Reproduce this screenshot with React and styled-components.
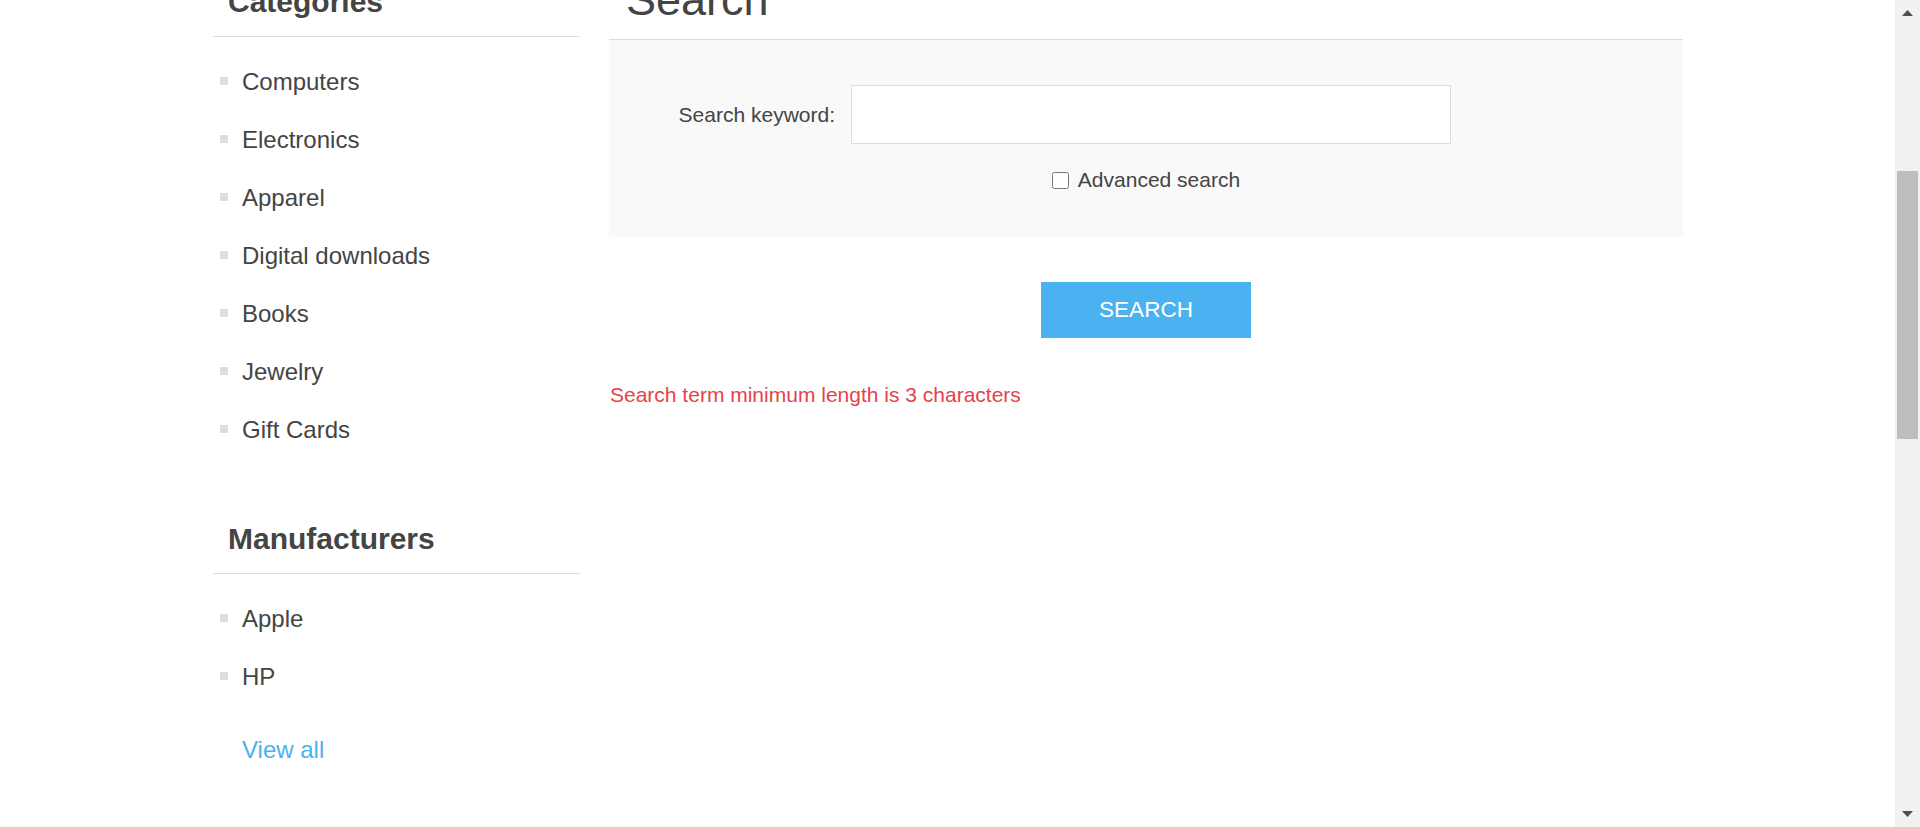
import styled, { createGlobalStyle } from "styled-components";

const GlobalStyle = createGlobalStyle`
  html, body {
    margin: 0;
    padding: 0;
    background: #fff;
    overflow: hidden;
  }
  body {
    font-family: "Liberation Sans", Arial, Helvetica, sans-serif;
    color: #444;
  }
`;

const categories = [
  "Computers",
  "Electronics",
  "Apparel",
  "Digital downloads",
  "Books",
  "Jewelry",
  "Gift Cards",
];
const manufacturers = ["Apple", "HP"];

const App = () => {
  return (
    <>
      <GlobalStyle />
      <Page>
        <Center>
          <Side>
            <Block>
              <BlockTitle>Categories</BlockTitle>
              <List>
                {categories.map((c) => (
                  <Item key={c}>{c}</Item>
                ))}
              </List>
            </Block>
            <Block>
              <BlockTitle>Manufacturers</BlockTitle>
              <List>
                {manufacturers.map((m) => (
                  <Item key={m}>{m}</Item>
                ))}
              </List>
              <ViewAll href="#">View all</ViewAll>
            </Block>
          </Side>
          <Main>
            <Title>Search</Title>
            <SearchBox>
              <FieldRow>
                <Label htmlFor="q">Search keyword:</Label>
                <Input id="q" type="text" />
              </FieldRow>
              <CheckRow>
                <Check type="checkbox" id="adv" />
                <CheckLabel htmlFor="adv">Advanced search</CheckLabel>
              </CheckRow>
            </SearchBox>
            <Buttons>
              <SearchButton>SEARCH</SearchButton>
            </Buttons>
            <Warning>Search term minimum length is 3 characters</Warning>
          </Main>
        </Center>
      </Page>
      <Scrollbar>
        <Arrow viewBox="0 0 11 6" $pos="top">
          <polygon points="0,6 5.5,0 11,6" fill="#505050" />
        </Arrow>
        <Thumb />
        <Arrow viewBox="0 0 11 6" $pos="bottom">
          <polygon points="0,0 11,0 5.5,6" fill="#505050" />
        </Arrow>
      </Scrollbar>
    </>
  );
};

const Page = styled.div`
  padding: 0 25px 0 1px;
  height: 100vh;
  overflow: hidden;
`;

const Center = styled.div`
  width: 1470px;
  margin: -27px auto 0;
  display: flex;
  justify-content: space-between;
  align-items: flex-start;
`;

const Side = styled.aside`
  width: 367px;
  padding-top: 11px;
`;

const Block = styled.div`
  margin-bottom: 48px;
`;

const BlockTitle = styled.h2`
  margin: 0;
  padding: 0 0 16px 15px;
  font-size: 30px;
  line-height: 36px;
  font-weight: bold;
  color: #444;
  border-bottom: 1px solid #ddd;
`;

const List = styled.ul`
  list-style: none;
  margin: 0;
  padding: 15px 0;
`;

const Item = styled.li`
  display: flex;
  align-items: center;
  padding: 14.5px 0;
  font-size: 24px;
  line-height: 29px;
  color: #444;
  &::before {
    content: "";
    width: 8px;
    height: 8px;
    margin: 0 14px 0 7px;
    background: #ddd;
  }
`;

const ViewAll = styled.a`
  display: block;
  padding: 14.5px 0 14.5px 29px;
  font-size: 24px;
  line-height: 29px;
  color: #4ab2f1;
  text-decoration: none;
`;

const Main = styled.main`
  width: 1074px;
`;

const Title = styled.h1`
  margin: 0;
  padding: 0 15px 12px 17px;
  font-size: 45px;
  line-height: 54px;
  font-weight: normal;
  color: #444;
  border-bottom: 1px solid #ddd;
`;

const SearchBox = styled.div`
  background: #f9f9f9;
  padding: 45px 0 42px;
`;

const FieldRow = styled.div`
  display: flex;
  align-items: center;
`;

const Label = styled.label`
  width: 226px;
  margin-right: 16px;
  text-align: right;
  font-size: 21px;
  color: #444;
`;

const Input = styled.input`
  box-sizing: border-box;
  width: 600px;
  height: 59px;
  margin: 0;
  border: 1px solid #ddd;
  background: #fff;
  outline: none;
`;

const CheckRow = styled.div`
  display: flex;
  justify-content: center;
  align-items: center;
  margin-top: 21px;
  height: 30px;
`;

const Check = styled.input`
  width: 17px;
  height: 17px;
  margin: 0 9px 0 0;
`;

const CheckLabel = styled.label`
  font-size: 21px;
  line-height: 30px;
  color: #444;
`;

const Buttons = styled.div`
  display: flex;
  justify-content: center;
  margin-top: 45px;
`;

const SearchButton = styled.button`
  width: 210px;
  height: 56px;
  border: none;
  background: #4ab2f1;
  color: #fff;
  font-family: inherit;
  font-size: 22.5px;
  text-transform: uppercase;
  cursor: pointer;
`;

const Warning = styled.div`
  margin-top: 42px;
  padding-left: 1px;
  font-size: 21px;
  line-height: 30px;
  color: #e4434b;
`;

const Scrollbar = styled.div`
  position: fixed;
  top: 0;
  right: 0;
  width: 25px;
  height: 100vh;
  background: #f1f1f1;
`;

const Thumb = styled.div`
  position: absolute;
  left: 2px;
  top: 171px;
  width: 21px;
  height: 268px;
  background: #bebebe;
`;

const Arrow = styled.svg`
  position: absolute;
  left: 7px;
  width: 11px;
  height: 6px;
  ${(p) => (p.$pos === "top" ? "top: 10px;" : "bottom: 10px;")}
`;

export default App;
